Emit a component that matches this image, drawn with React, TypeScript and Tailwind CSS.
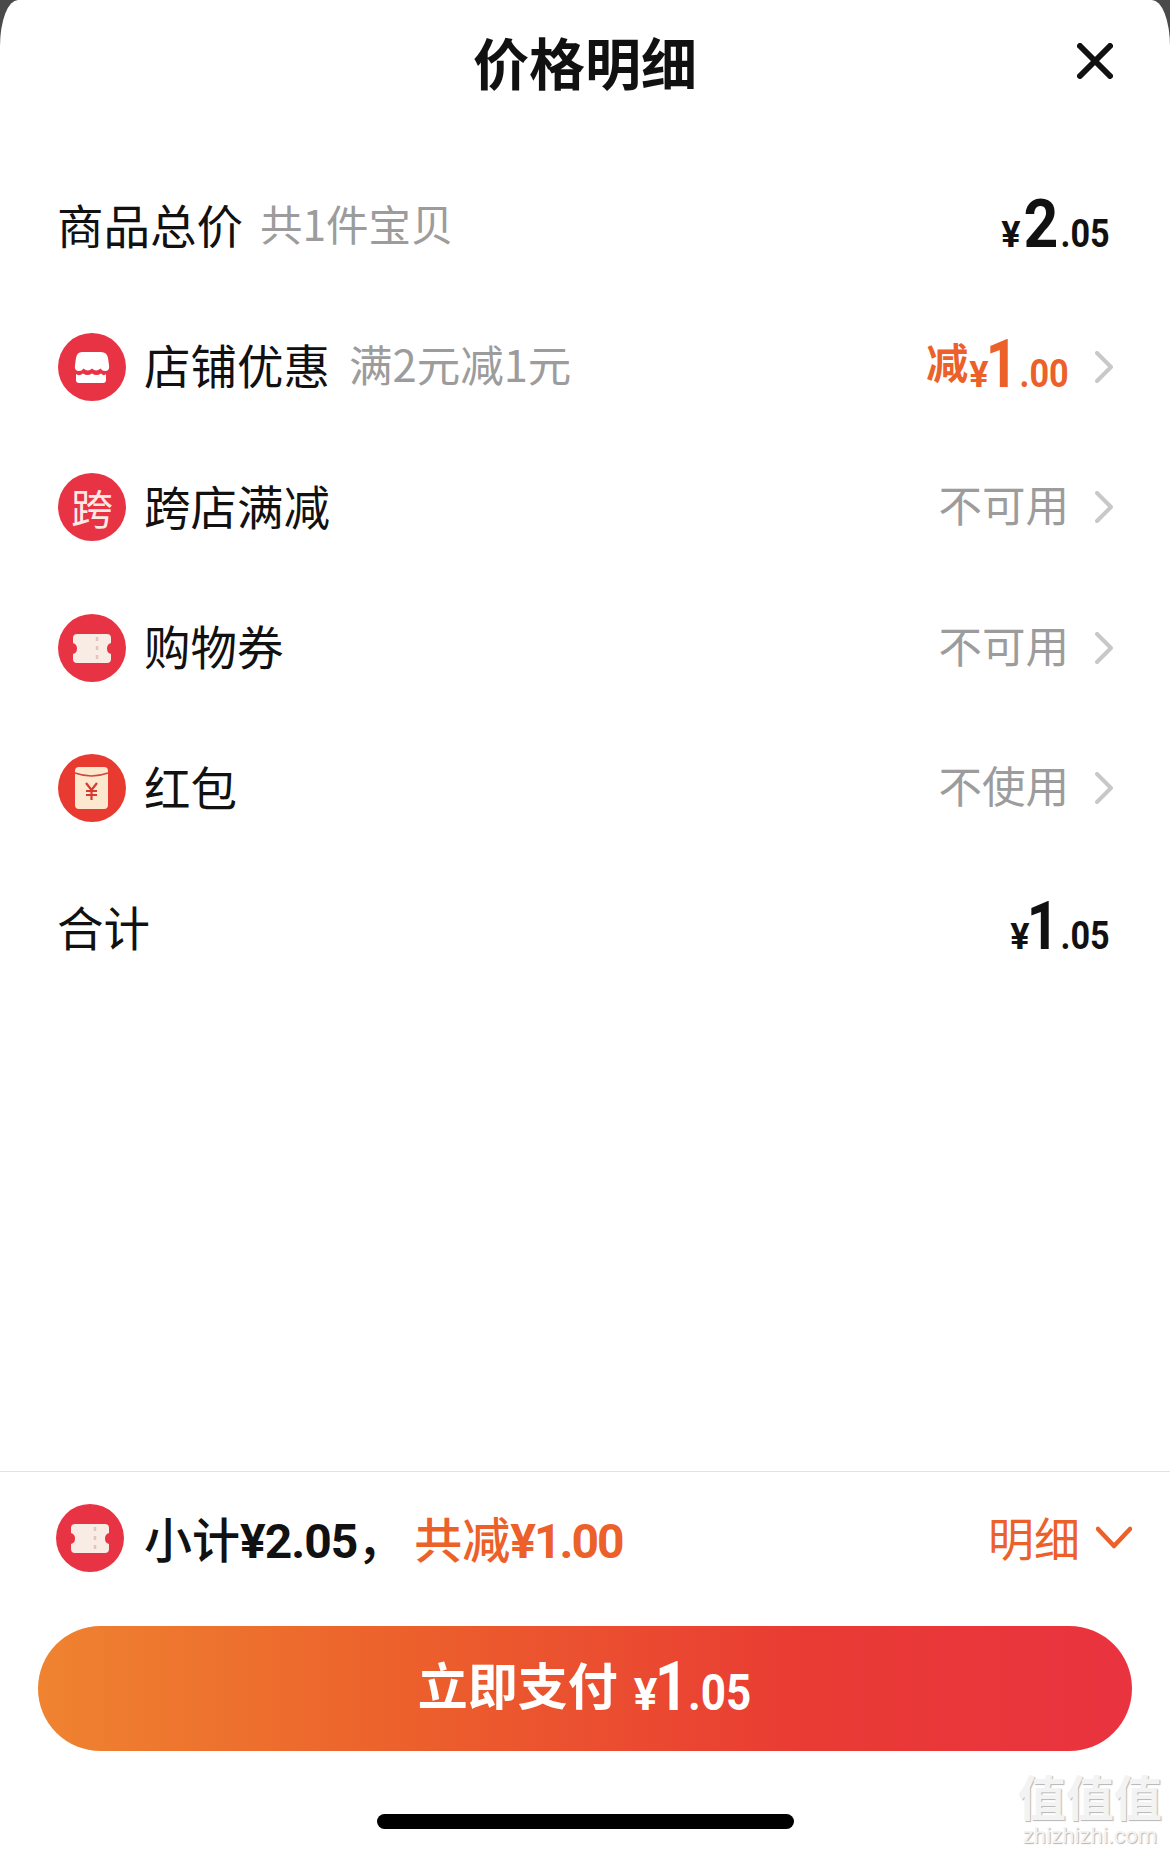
const cjk = "font-['Noto_Sans_CJK_SC',sans-serif]";
const num = "font-['Roboto',sans-serif] font-bold";

function Price({ int, dec, color, one }: { int: string; dec: string; color: string; one?: boolean }) {
  return (
    <span className={`${num} ${color} flex items-baseline leading-none mb-[3px]`}>
      <span className={`text-[36px] ${one ? "-mr-[2px]" : "mr-[2px]"}`}>¥</span>
      <span className={`text-[66px] inline-block ${one ? "scale-x-[0.85] -mr-[3px] -ml-[3px]" : "scale-x-[0.92] -mr-[1px]"}`}>{int}</span>
      <span className="text-[38px] inline-block origin-right scale-x-[0.9] -ml-[4px]">.{dec}</span>
    </span>
  );
}

function Chevron() {
  return (
    <svg width="18" height="32" viewBox="0 0 18 32" fill="none" className="ml-[26px] shrink-0">
      <path d="M2 2 L16 16 L2 30" stroke="#c8c8c8" strokeWidth="4" strokeLinecap="round" strokeLinejoin="round" />
    </svg>
  );
}

function Circle({ color, children }: { color: string; children: React.ReactNode }) {
  return (
    <span className={`w-[68px] h-[68px] rounded-full flex items-center justify-center shrink-0 ${color}`}>
      {children}
    </span>
  );
}

function StoreIcon() {
  return (
    <Circle color="bg-[#e83344]">
      <svg width="68" height="68" viewBox="0 0 68 68">
        <path d="M24 19 H43 Q49 19 50 25 L51 32 Q52 38 47 38 Q44 38 42.500 35.500 Q38 39.500 34 35.500 Q30 39.500 25.500 35.500 Q24 38 21 38 Q16 38 17 32 L18 25 Q19 19 24 19Z" fill="#fff" />
        <path d="M18 41 Q21 43.500 25 40.500 Q29.500 43.500 34 40.500 Q38.500 43.500 43 40.500 Q46 43.500 48 41 V47 Q48 50 45 50 H21 Q18 50 18 47Z" fill="#fff" />
      </svg>
    </Circle>
  );
}

function TicketIcon() {
  return (
    <Circle color="bg-[#e83344]">
      <svg width="68" height="68" viewBox="0 0 68 68">
        <path d="M19 20 H49 Q53 20 53 24 V29 Q49 30 49 34.500 Q49 39 53 40 V45 Q53 49 49 49 H19 Q15 49 15 45 V40 Q19 39 19 34.500 Q19 30 15 29 V24 Q15 20 19 20Z" fill="#f8ece4" />
        <path d="M39 23 V47" stroke="#e2c4bc" strokeWidth="2.500" strokeDasharray="4 5" />
      </svg>
    </Circle>
  );
}

function EnvelopeIcon() {
  return (
    <Circle color="bg-[#e83a30]">
      <svg width="68" height="68" viewBox="0 0 68 68">
        <rect x="17" y="13" width="33" height="42" rx="4" fill="#fbe8cf" />
        <path d="M17 19 Q33.500 25 50 19" stroke="#d4453a" strokeWidth="1.500" fill="none" />
        <path d="M28 29 L33.500 36 L39 29 M33.500 36 V46 M28 37 H39 M28 41 H39" stroke="#d63a30" strokeWidth="2.200" fill="none" />
      </svg>
    </Circle>
  );
}

function Row({ icon, label, sub, small, right, chevron }: { icon?: React.ReactNode; label: string; sub?: string; small?: boolean; right: React.ReactNode; chevron?: boolean }) {
  return (
    <div className={`h-[140.5px] flex items-center ${icon ? "pl-[58px]" : "pl-[57px]"} ${chevron ? "pr-[57px]" : "pr-[60px]"}`}>
      {icon && <span className="mr-[18px] flex">{icon}</span>}
      <span className="text-[46.5px] leading-none text-[#111] mb-[5px]">{label}</span>
      {sub && (
        <span className={`leading-none text-[#9c9c9c] mb-[7px] ${small ? "text-[42.5px] ml-[17px]" : "text-[43.5px] ml-[19px]"}`}>{sub}</span>
      )}
      <span className="ml-auto flex items-center">
        {right}
        {chevron && <Chevron />}
      </span>
    </div>
  );
}

const Gray = ({ t }: { t: string }) => <span className="text-[43.5px] leading-none text-[#9c9c9c] mb-[7px]">{t}</span>;

export default function App() {
  return (
    <div className={`w-[1170px] h-[1853px] bg-[#4a4a4a] overflow-hidden ${cjk}`}>
      <div className="relative w-full h-full bg-white rounded-tl-[18px_46px] rounded-tr-[18px_46px] flex flex-col">
        <header className="h-[156px] shrink-0 relative flex justify-center pt-[33px]">
          <h1 className="text-[56px] leading-none font-bold text-[#111]">价格明细</h1>
          <button className="absolute left-[1077px] top-[43px]">
            <svg width="36" height="36" viewBox="0 0 36 36" className="block">
              <path d="M3 3 L33 33 M33 3 L3 33" stroke="#111" strokeWidth="6" strokeLinecap="round" />
            </svg>
          </button>
        </header>

        <Row label="商品总价" sub="共1件宝贝" small right={<Price int="2" dec="05" color="text-[#111]" />} />
        <Row
          icon={<StoreIcon />}
          label="店铺优惠"
          sub="满2元减1元"
          chevron
          right={
            <span className="flex items-baseline text-[#ec6029] leading-none">
              <span className="text-[42px] font-bold mr-[1px] -translate-y-[8px]">减</span>
              <Price int="1" dec="00" color="text-[#ec6029]" one />
            </span>
          }
        />
        <Row
          icon={
            <Circle color="bg-[#e83344]">
              <span className="text-[42px] leading-none text-[#fbe9e4]">跨</span>
            </Circle>
          }
          label="跨店满减"
          chevron
          right={<Gray t="不可用" />}
        />
        <Row icon={<TicketIcon />} label="购物券" chevron right={<Gray t="不可用" />} />
        <Row icon={<EnvelopeIcon />} label="红包" chevron right={<Gray t="不使用" />} />
        <Row label="合计" right={<Price int="1" dec="05" color="text-[#111]" one />} />

        <div className="flex-1" />

        <footer className="shrink-0 border-t border-[#e2e2e2] h-[382px] relative">
          <div className="h-[131px] flex items-center pl-[56px] pr-[38px]">
            <span className="mr-[20px] flex"><TicketIcon /></span>
            <span className="text-[48px] leading-none font-medium text-[#111] mt-[3px]">
              小计<span className="font-['Roboto',sans-serif] font-bold tracking-[-1px]">¥2.05</span>，
            </span>
            <span className="text-[48px] leading-none font-medium text-[#ec6029] ml-[9px] mt-[3px]">
              共减<span className="font-['Roboto',sans-serif] font-bold tracking-[-2px]">¥1.00</span>
            </span>
            <span className="ml-auto text-[46px] leading-none text-[#ec6029] mb-[3px]">明细</span>
            <svg width="36" height="24" viewBox="0 0 36 24" className="ml-[16px]">
              <path d="M2 3 L18 20 L34 3" stroke="#ec6029" strokeWidth="4.500" fill="none" strokeLinecap="round" strokeLinejoin="round" />
            </svg>
          </div>
          <div className="mt-[23px] mx-[38px] h-[125px] rounded-full bg-[linear-gradient(90deg,#ef8330_0%,#ec5f2c_35%,#e93b34_70%,#e93340_100%)] flex items-center justify-center">
            <span className="flex items-baseline text-white">
              <span className="text-[50px] leading-none font-bold mr-[16px] -translate-y-[5px]">立即支付</span>
              <span className={`${num} flex items-baseline leading-none mb-[3px]`}>
                <span className="text-[44px] -mr-[2px]">¥</span>
                <span className="text-[68px] inline-block scale-x-[0.85] -mx-[3px]">1</span>
                <span className="text-[50px] inline-block origin-left scale-x-[0.88] -mr-[8px]">.05</span>
              </span>
            </span>
          </div>
          <div className="mt-[63px] mx-auto w-[417px] h-[15px] rounded-full bg-black" />
          <div className="absolute left-[1018px] top-[299px] flex flex-col items-center text-[#f3f3f3] [text-shadow:1px_1px_1px_#b5b5b5]">
            <span className="text-[48px] leading-none font-bold">值值值</span>
            <span className="text-[22px] leading-none font-['Roboto',sans-serif] mt-[6px]">zhizhizhi.com</span>
          </div>
        </footer>
      </div>
    </div>
  );
}
